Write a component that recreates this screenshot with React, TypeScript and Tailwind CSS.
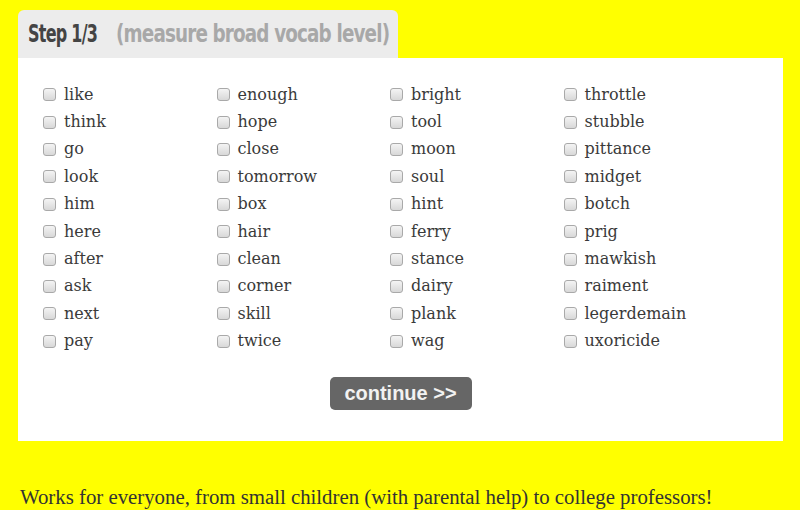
const WORDS = [
  ['like', 'think', 'go', 'look', 'him', 'here', 'after', 'ask', 'next', 'pay'],
  ['enough', 'hope', 'close', 'tomorrow', 'box', 'hair', 'clean', 'corner', 'skill', 'twice'],
  ['bright', 'tool', 'moon', 'soul', 'hint', 'ferry', 'stance', 'dairy', 'plank', 'wag'],
  ['throttle', 'stubble', 'pittance', 'midget', 'botch', 'prig', 'mawkish', 'raiment', 'legerdemain', 'uxoricide'],
];

function Box() {
  return (
    <span className="inline-block w-[13px] h-[13px] rounded-[3px] border border-[#a9a9a9] bg-gradient-to-b from-[#f4f4f4] to-[#d8d8d8] shrink-0" />
  );
}

export default function App() {
  const titleFont = { fontFamily: '"DejaVu Sans", sans-serif', fontStretch: 'condensed' };
  return (
    <div className="min-h-[510px] bg-[#ffff00] pl-[18px] pt-[10px]">
      <div className="w-[380px] h-[48px] bg-[#ececec] rounded-t-[6px] flex items-center pl-[10px] font-bold whitespace-nowrap text-[24px] tracking-[-1px]" style={titleFont}>
        <span className="w-[69px]">
          <span className="inline-block origin-left scale-x-[0.74] text-[#444]">Step 1/3</span>
        </span>
        <span className="ml-[19px] w-[269px]">
          <span className="inline-block origin-left scale-x-[0.85] text-[#a8a8a8]">(measure broad vocab level)</span>
        </span>
      </div>
      <div className="w-[765px] h-[383px] bg-white pt-[23px] pl-[25px]">
        <div className="grid grid-cols-[173.5px_173.5px_173.5px_173.5px]" style={{ fontFamily: '"DejaVu Serif", serif' }}>
          {WORDS.map((col, i) => (
            <div key={i} className="flex flex-col">
              {col.map(w => (
                <label key={w} className="h-[27.4px] flex items-center gap-[8px] text-[16px] text-[#3a3a3a]">
                  <Box />
                  <span>{w}</span>
                </label>
              ))}
            </div>
          ))}
        </div>
        <div className="flex justify-center pr-[25px] mt-[22px]">
          <button className="w-[142px] h-[33px] rounded-[5px] bg-[#666] text-[#f2f2f2] text-[20px] font-bold" style={{ fontFamily: '"Liberation Sans", Arial, sans-serif' }}>
            continue &gt;&gt;
          </button>
        </div>
      </div>
      <p className="mt-[46px] pl-[2px] text-[20.8px] text-[#333] leading-none" style={{ fontFamily: '"Liberation Serif", serif' }}>
        Works for everyone, from small children (with parental help) to college professors!
      </p>
    </div>
  );
}
